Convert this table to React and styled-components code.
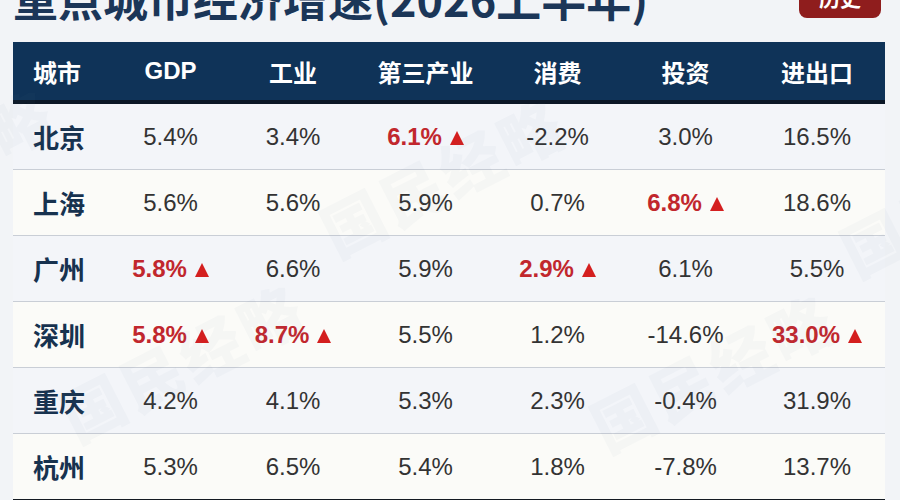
import React from 'react'
import styled, { createGlobalStyle } from 'styled-components'

const GlobalStyle = createGlobalStyle`
    html, body {
        margin: 0;
        padding: 0;
        background: #f2f4f7;
        overflow: hidden;
    }
    body {
        font-family: "Liberation Sans", "Noto Sans CJK SC", sans-serif;
    }
`;

const COLS = '100px 115px 130px 135px 129px 127px 136px';

const Page = styled.div`
    position: relative;
    width: 900px;
    height: 500px;
    overflow: hidden;
    padding-left: 13px;
    box-sizing: border-box;
`;

const TitleBar = styled.div`
    display: flex;
    justify-content: space-between;
    align-items: flex-start;
    width: 872px;
    height: 67px;
    margin-top: -25px;
`;

const Title = styled.h1`
    margin: 0;
    font-family: "Noto Sans CJK SC", sans-serif;
    font-size: 45px;
    line-height: 45px;
    font-weight: 700;
    color: #1b3658;
`;

const TopButton = styled.button`
    width: 82px;
    height: 43px;
    margin-top: 0;
    margin-right: 4px;
    border: none;
    border-radius: 8px;
    background: #8f1d1d;
    color: #fff;
    font-family: "Noto Sans CJK SC", sans-serif;
    font-size: 21px;
    font-weight: 700;
    padding: 0;
`;

const Table = styled.div`
    width: 872px;
    border-bottom: 3px solid #141a22;
`;

const Row = styled.div`
    display: grid;
    grid-template-columns: ${COLS};
    align-items: center;
    height: ${p => p.head ? '58px' : '65px'};
    background: ${p => p.head ? '#0f3358' : (p.even ? '#fbfbf8' : '#f3f5f9')};
    border-top: ${p => p.first || p.head ? 'none' : '1px solid #c9ced6'};
    border-bottom: ${p => p.head ? '4px solid #0b1726' : 'none'};
`;

const HeadCell = styled.div`
    color: #fff;
    font-size: 24px;
    font-weight: 700;
    text-align: ${p => p.left ? 'left' : 'center'};
    padding-left: ${p => p.left ? '20px' : '0'};
    white-space: nowrap;
`;

const City = styled.div`
    padding-left: 20px;
    color: #17324f;
    font-size: 26px;
    font-weight: 700;
`;

const Cell = styled.div`
    text-align: center;
    font-size: 24px;
    white-space: nowrap;
    color: ${p => p.up ? '#c1272d' : '#333'};
    font-weight: ${p => p.up ? 700 : 400};
`;

const Arrow = styled.span`
    display: inline-block;
    width: 0;
    height: 0;
    margin-left: 8px;
    border-left: 7.5px solid transparent;
    border-right: 7.5px solid transparent;
    border-bottom: 14px solid #d41f1f;
`;

const Watermark = styled.div`
    position: absolute;
    font-family: "Noto Sans CJK SC", sans-serif;
    font-size: 62px;
    font-weight: 900;
    letter-spacing: 4px;
    color: rgba(110, 130, 165, 0.04);
    transform: rotate(-27deg);
    pointer-events: none;
    white-space: nowrap;
`;

const heads = ['GDP', '工业', '第三产业', '消费', '投资', '进出口'];

const rows = [
    ['北京', '5.4%', '3.4%', '6.1%*', '-2.2%', '3.0%', '16.5%'],
    ['上海', '5.6%', '5.6%', '5.9%', '0.7%', '6.8%*', '18.6%'],
    ['广州', '5.8%*', '6.6%', '5.9%', '2.9%*', '6.1%', '5.5%'],
    ['深圳', '5.8%*', '8.7%*', '5.5%', '1.2%', '-14.6%', '33.0%*'],
    ['重庆', '4.2%', '4.1%', '5.3%', '2.3%', '-0.4%', '31.9%'],
    ['杭州', '5.3%', '6.5%', '5.4%', '1.8%', '-7.8%', '13.7%'],
];

const marks = [
    { left: 310, top: 130 },
    { left: 50, top: 315 },
    { left: 580, top: 325 },
    { left: -200, top: 120 },
    { left: 830, top: 150 },
];

export default function App() {
    return (
        <Page>
            <GlobalStyle />
            <TitleBar>
                <Title>重点城市经济增速(2026上半年)</Title>
                <TopButton>历史</TopButton>
            </TitleBar>
            <Table>
                <Row head>
                    <HeadCell left>城市</HeadCell>
                    {heads.map(h => <HeadCell key={h}>{h}</HeadCell>)}
                </Row>
                {rows.map((r, i) => (
                    <Row key={r[0]} first={i === 0} even={i % 2 === 1}>
                        <City>{r[0]}</City>
                        {r.slice(1).map((v, j) => {
                            const up = v.endsWith('*');
                            return (
                                <Cell key={j} up={up}>
                                    {up ? v.slice(0, -1) : v}
                                    {up && <Arrow />}
                                </Cell>
                            );
                        })}
                    </Row>
                ))}
            </Table>
            {marks.map((m, i) => (
                <Watermark key={i} style={{ left: m.left, top: m.top }}>国民经略</Watermark>
            ))}
        </Page>
    )
}
